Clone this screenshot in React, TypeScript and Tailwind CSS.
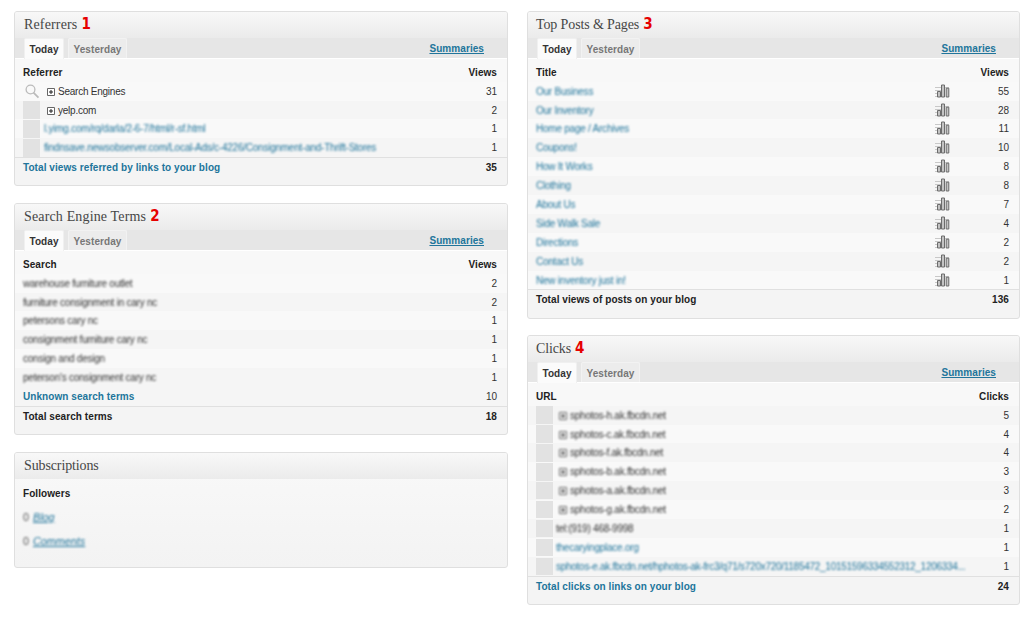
import type { ReactNode } from 'react';

const bold = 'font-bold text-[10px] tracking-[0.07px]';
const regular = 'text-[10px] tracking-[-0.24px]';

function Title({ text, mark, tight, inset = 'pl-[9px]' }: { text: string; mark?: string; tight?: boolean; inset?: string }) {
  return (
    <div className={`flex h-[26px] items-center gap-[4px] bg-linear-to-b from-[#f8f8f8] to-[#ebebeb] ${inset}`}>
      <h2 className={`font-['Liberation_Serif',serif] text-[14px] leading-none text-[#464646] ${tight ? 'tracking-[-0.12px]' : 'tracking-[0.15px]'}`}>{text}</h2>
      {mark && <span className="-mt-px font-['DejaVu_Sans_Condensed','DejaVu_Sans',sans-serif] text-[15px] leading-none font-bold text-[#e60000]">{mark}</span>}
    </div>
  );
}

function Tabs() {
  return (
    <div className={`flex h-[21px] items-end border-b border-white bg-[#e6e6e6] pl-[9px] ${bold}`}>
      <div className="-mb-px flex h-[21px] w-[40px] items-center justify-center rounded-t-[2px] border border-b-0 border-[#f0f0f0] bg-[#fbfbfb] pt-[2px] text-[#333]">Today</div>
      <div className="ml-[4px] flex h-[20px] w-[59px] items-center justify-center rounded-t-[2px] border border-b-0 border-[#f2f2f2] bg-[#ececec] pt-[2px] text-[#777]">Yesterday</div>
      <a className="mr-[23px] mb-[4px] ml-auto text-[#21759b] underline">Summaries</a>
    </div>
  );
}

function Row({ children, value, alt }: { children: ReactNode; value: string; alt?: boolean }) {
  return (
    <div className={`flex h-[18.9px] items-center pr-[10px] pl-[8px] ${regular} ${alt ? 'bg-[#f5f5f5]' : 'bg-[#f9f9f9]'}`}>
      {children}
      <span className="ml-auto pt-px tracking-normal text-[#333]">{value}</span>
    </div>
  );
}

function Panel({ title, mark, head, unit, total, sum, link, tight, className, children }: {
  title: string; mark: string; head: string; unit: string; total: string; sum: string;
  link?: boolean; tight?: boolean; className: string; children: ReactNode;
}) {
  return (
    <section className={`overflow-hidden rounded-[3px] border border-[#dfdfdf] bg-[#f4f4f4] ${className}`}>
      <Title text={title} mark={mark} tight={tight} inset={tight ? 'pl-[8px]' : 'pl-[9px]'} />
      <Tabs />
      <div className={`flex h-[22.7px] items-center justify-between bg-[#f8f8f8] pt-[6px] pr-[10px] pl-[8px] text-[#222] ${bold}`}>
        <span>{head}</span><span>{unit}</span>
      </div>
      {children}
      <div className={`flex h-[21px] items-center justify-between border-t border-[#e0e0e0] pr-[10px] pl-[8px] text-[#222] ${bold}`}>
        <span className={link ? 'text-[#21759b]' : ''}>{total}</span><span>{sum}</span>
      </div>
    </section>
  );
}

const Blank = () => <span className="h-[17.5px] w-[17px] shrink-0 bg-[#e2e2e2]" />;

const Plus = () => (
  <svg width="8" height="8" viewBox="0 0 8 8" className="shrink-0">
    <path d="M.5.5h7v7h-7z" fill="#fff" stroke="#666" />
    <path d="M2 4h4M4 2v4" stroke="#222" />
  </svg>
);

const Magnifier = () => (
  <svg width="17" height="16" viewBox="0 0 17 16" fill="none" stroke="#bbb" className="shrink-0">
    <circle cx="7.5" cy="6.5" r="4.4" strokeWidth="1.3" />
    <path d="m10.5 9.7 5 5" strokeWidth="1.7" />
  </svg>
);

const Bars = () => (
  <svg width="15" height="14" viewBox="0 0 15 14" className="absolute top-[2px] left-[407px]">
    <path d="M0 3.5h6M0 6.5h6M0 9.5h2M0 12.5h2M10 3.5h4" stroke="#c8c8c8" />
    <path d="M2.5 7.5h3v5.5h-3zM6.5 1h3v12h-3zM11.2 4.2h2.6V13h-2.6z" fill="#c4c4c4" stroke="#6c6c6c" />
  </svg>
);

const terms: [string, string][] = [
  ['warehouse furniture outlet', '2'],
  ['furniture consignment in cary nc', '2'],
  ['petersons cary nc', '1'],
  ['consignment furniture cary nc', '1'],
  ['consign and design', '1'],
  ["peterson's consignment cary nc", '1'],
];

const posts: [string, string][] = [
  ['Our Business', '55'], ['Our Inventory', '28'], ['Home page / Archives', '11'], ['Coupons!', '10'],
  ['How It Works', '8'], ['Clothing', '8'], ['About Us', '7'], ['Side Walk Sale', '4'],
  ['Directions', '2'], ['Contact Us', '2'], ['New inventory just in!', '1'],
];

const hosts: [string, string][] = [['h', '5'], ['c', '4'], ['f', '4'], ['b', '3'], ['a', '3'], ['g', '2']];

export default function App() {
  return (
    <main className="flex h-[623px] w-[1024px] items-start gap-[19px] bg-white pt-[11px] pl-[14px] font-['Liberation_Sans',sans-serif] leading-none">
      <div className="flex w-[494px] flex-col">
        <Panel className="h-[175px]" title="Referrers" mark="1" head="Referrer" unit="Views" total="Total views referred by links to your blog" sum="35" link>
          <Row value="31"><Magnifier /><span className="ml-[7px] flex items-center gap-[3px] pt-[2px] text-[#333]"><Plus />Search Engines</span></Row>
          <Row value="2" alt><Blank /><span className="ml-[7px] flex items-center gap-[3px] pt-[2px] text-[#333]"><Plus />yelp.com</span></Row>
          <Row value="1"><Blank /><span className="ml-[4px] pt-px text-[#21759b] blur-[1.3px]">l.yimg.com/rq/darla/2-6-7/html/r-sf.html</span></Row>
          <Row value="1" alt><Blank /><span className="ml-[4px] pt-px text-[#21759b] blur-[1.3px]">findnsave.newsobserver.com/Local-Ads/c-4226/Consignment-and-Thrift-Stores</span></Row>
        </Panel>
        <Panel className="mt-[17px] h-[232px]" title="Search Engine Terms" mark="2" head="Search" unit="Views" total="Total search terms" sum="18">
          {terms.map(([t, n], i) => (
            <Row key={t} value={n} alt={i % 2 === 1}><span className="pt-px text-[#333] blur-[1.3px]">{t}</span></Row>
          ))}
          <Row value="10" alt><span className={`pt-px text-[#21759b] ${bold}`}>Unknown search terms</span></Row>
        </Panel>
        <section className="mt-[17px] h-[116px] overflow-hidden rounded-[3px] border border-[#dfdfdf] bg-linear-to-b from-[#f9f9f9] to-[#f3f3f3]">
          <div className="h-[25px] border-b border-[#e4e4e4]"><Title text="Subscriptions" tight /></div>
          <div className="pt-[11px] pl-[8px]">
            <div className={`text-[#222] ${bold}`}>Followers</div>
            <div className="mt-[13px] flex gap-[4px] text-[10.8px] text-[#555] blur-[1.3px]"><span>0</span><a className="text-[#21759b] italic underline">Blog</a></div>
            <div className="mt-[13px] flex gap-[4px] text-[10.8px] text-[#555] blur-[1.3px]"><span>0</span><a className="text-[#21759b] italic underline">Comments</a></div>
          </div>
        </section>
      </div>
      <div className="flex w-[493px] flex-col">
        <Panel className="h-[308px]" title="Top Posts & Pages" mark="3" head="Title" unit="Views" total="Total views of posts on your blog" sum="136" tight>
          {posts.map(([t, n], i) => (
            <div key={t} className="relative">
              <Row value={n} alt={i % 2 === 1}><span className="pt-px text-[#21759b] blur-[1.3px]">{t}</span></Row>
              <Bars />
            </div>
          ))}
        </Panel>
        <Panel className="mt-[16px] h-[270px]" title="Clicks" mark="4" head="URL" unit="Clicks" total="Total clicks on links on your blog" sum="24" link tight>
          {hosts.map(([h, n], i) => (
            <Row key={h} value={n} alt={i % 2 === 0}>
              <Blank />
              <span className="ml-[6px] flex items-center gap-[3px] pt-px text-[#333] blur-[1.3px]"><Plus />sphotos-{h}.ak.fbcdn.net</span>
            </Row>
          ))}
          <Row value="1" alt><Blank /><span className="ml-[3px] pt-px text-[#333] blur-[1.3px]">tel:(919) 468-9998</span></Row>
          <Row value="1"><Blank /><span className="ml-[3px] pt-px text-[#21759b] blur-[1.3px]">thecaryingplace.org</span></Row>
          <Row value="1" alt><Blank /><span className="ml-[3px] pt-px tracking-[-0.27px] text-[#21759b] blur-[1.3px]">sphotos-e.ak.fbcdn.net/hphotos-ak-frc3/q71/s720x720/1185472_10151596334552312_1206334...</span></Row>
        </Panel>
      </div>
    </main>
  );
}
